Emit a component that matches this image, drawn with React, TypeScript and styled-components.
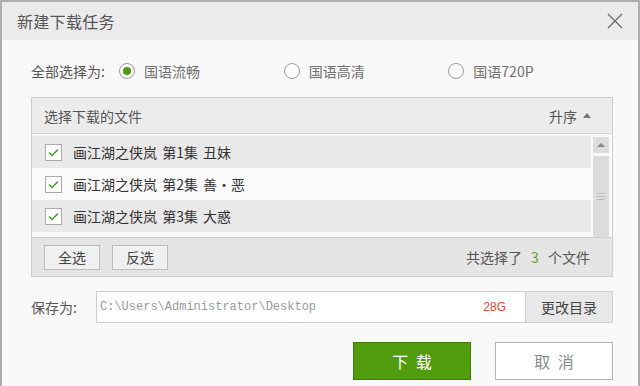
import React from 'react';
import styled, { createGlobalStyle } from 'styled-components';

const Global = createGlobalStyle`
  html, body { margin: 0; padding: 0; background: #ffffff; }
  body { font-family: "Noto Sans CJK SC", "Microsoft YaHei", sans-serif; }
  * { box-sizing: border-box; }
`;

const Window = styled.div`
  width: 640px;
  height: 386px;
  border: 2px solid #aeaeae;
  border-bottom: none;
  background: #f9f9f9;
  display: flex;
  flex-direction: column;
`;

const TitleBar = styled.div`
  height: 38px;
  flex: none;
  background: #ebebeb;
  display: flex;
  align-items: center;
  justify-content: space-between;
  padding: 0 15px 0 15px;
`;

const Title = styled.div`
  font-size: 16px;
  color: #555;
  letter-spacing: 0.3px;
`;

const Close = styled.svg`
  width: 16px;
  height: 16px;
  display: block;
`;

const Body = styled.div`
  flex: 1;
  display: flex;
  flex-direction: column;
  padding: 0 25px 0 29px;
`;

const RadioRow = styled.div`
  display: flex;
  align-items: center;
  height: 24px;
  margin-top: 19px;
`;

const RowLabel = styled.div<{ $w: number }>`
  width: ${p => p.$w}px;
  flex: none;
  font-size: 14px;
  color: #555;
`;

const Option = styled.div`
  width: 165px;
  display: flex;
  align-items: center;
  gap: 9px;
  font-size: 14px;
  color: #707070;
`;

const RadioCircle = styled.span<{ $on?: boolean }>`
  width: 16px;
  height: 16px;
  border-radius: 50%;
  border: 1px solid #9a9a9a;
  background: #fff;
  display: flex;
  align-items: center;
  justify-content: center;
  &::after {
    content: '';
    width: 8px;
    height: 8px;
    border-radius: 50%;
    background: ${p => (p.$on ? '#4f9a12' : 'transparent')};
  }
`;

const Panel = styled.div`
  margin-top: 14px;
  height: 180px;
  border: 1px solid #cdcdcd;
  background: #fafafa;
  display: flex;
  flex-direction: column;
`;

const PanelHead = styled.div`
  height: 36px;
  flex: none;
  background: #ececec;
  border-bottom: 1px solid #d3d3d3;
  display: flex;
  align-items: center;
  justify-content: space-between;
  padding: 0 21px 0 12px;
  font-size: 14px;
  color: #555;
`;

const Sort = styled.div`
  display: flex;
  align-items: center;
  gap: 6px;
`;

const Tri = styled.span`
  width: 0;
  height: 0;
  border-left: 4.5px solid transparent;
  border-right: 4.5px solid transparent;
  border-bottom: 5px solid #777;
`;

const ListArea = styled.div`
  flex: 1;
  display: flex;
  padding-top: 2px;
  overflow: hidden;
`;

const Rows = styled.div`
  flex: 1;
  display: flex;
  flex-direction: column;
`;

const Row = styled.div<{ $alt?: boolean }>`
  height: 32px;
  flex: none;
  display: flex;
  align-items: center;
  gap: 11px;
  padding-left: 13px;
  background: ${p => (p.$alt ? '#fafafa' : '#e9e9e9')};
  font-size: 14px;
  color: #333;
  white-space: pre;
  word-spacing: 2px;
`;

const Check = styled.span`
  width: 17px;
  height: 17px;
  border: 1px solid #a9a9a9;
  background: #fff;
  display: flex;
  align-items: center;
  justify-content: center;
`;

const Scrollbar = styled.div`
  width: 16px;
  margin: 1px 3px 0 2px;
  display: flex;
  flex-direction: column;
  gap: 3px;
`;

const ScrollBtn = styled.div`
  height: 16px;
  background: #dcdcdc;
  display: flex;
  align-items: center;
  justify-content: center;
`;

const SmallTri = styled.span`
  width: 0;
  height: 0;
  border-left: 4px solid transparent;
  border-right: 4px solid transparent;
  border-bottom: 4px solid #888;
`;

const Thumb = styled.div`
  flex: 1;
  background: #dcdcdc;
  display: flex;
  align-items: center;
  justify-content: center;
`;

const Grip = styled.span`
  width: 8px;
  height: 7px;
  border-top: 1px solid #bdbdbd;
  border-bottom: 1px solid #bdbdbd;
  position: relative;
  &::after {
    content: '';
    position: absolute;
    left: 0;
    right: 0;
    top: 2px;
    border-top: 1px solid #bdbdbd;
  }
`;

const PanelFoot = styled.div`
  height: 39px;
  flex: none;
  background: #e5e5e5;
  border-top: 1px solid #d0d0d0;
  display: flex;
  align-items: center;
  justify-content: space-between;
  padding: 0 22px 0 12px;
`;

const FootBtns = styled.div`
  display: flex;
  gap: 12px;
`;

const SmallBtn = styled.div`
  width: 56px;
  height: 25px;
  border: 1px solid #bcbcbc;
  background: #f0f0f0;
  font-size: 14px;
  color: #444;
  display: flex;
  align-items: center;
  justify-content: center;
`;

const Count = styled.div`
  font-size: 14px;
  color: #555;
  white-space: pre;
  word-spacing: 6px;
`;

const Num = styled.span`
  color: #6a9e2a;
`;

const SaveRow = styled.div`
  margin-top: 14px;
  height: 32px;
  display: flex;
  align-items: center;
`;

const PathBox = styled.div`
  flex: 1;
  height: 32px;
  border: 1px solid #cfcfcf;
  background: #fff;
  display: flex;
  align-items: center;
  justify-content: space-between;
  padding: 0 19px 0 3px;
`;

const PathText = styled.span`
  font-family: "Liberation Mono", "DejaVu Sans Mono", monospace;
  font-size: 12px;
  color: #9a9a9a;
`;

const Size = styled.span`
  font-family: "Liberation Sans", Arial, sans-serif;
  font-size: 12px;
  color: #e04a2e;
`;

const DirBtn = styled.div`
  width: 87px;
  height: 32px;
  background: #e8e8e8;
  border: 1px solid #cfcfcf;
  border-left: none;
  font-size: 14px;
  color: #444;
  display: flex;
  align-items: center;
  justify-content: center;
`;

const Actions = styled.div`
  margin-top: 19px;
  display: flex;
  justify-content: flex-end;
  gap: 24px;
`;

const ActionBtn = styled.div<{ $primary?: boolean }>`
  width: 118px;
  height: 38px;
  border: 1px solid ${p => (p.$primary ? '#3f7d08' : '#b3b3b3')};
  background: ${p => (p.$primary ? '#519c0c' : '#ffffff')};
  color: ${p => (p.$primary ? '#ffffff' : '#8a8a8a')};
  font-size: 16px;
  display: flex;
  align-items: center;
  justify-content: center;
  white-space: pre;
  word-spacing: 4px;
`;

const files = ['画江湖之侠岚 第1集 丑妹', '画江湖之侠岚 第2集 善・恶', '画江湖之侠岚 第3集 大惑', ''];

export default function App() {
  return (
    <>
      <Global />
      <Window>
        <TitleBar>
          <Title>新建下载任务</Title>
          <Close viewBox="0 0 16 16">
            <path d="M1 1 L15 15 M15 1 L1 15" stroke="#6e6e6e" strokeWidth="1.4" fill="none" />
          </Close>
        </TitleBar>
        <Body>
          <RadioRow>
            <RowLabel $w={88}>全部选择为:</RowLabel>
            <Option>
              <RadioCircle $on />
              国语流畅
            </Option>
            <Option>
              <RadioCircle />
              国语高清
            </Option>
            <Option>
              <RadioCircle />
              国语720P
            </Option>
          </RadioRow>
          <Panel>
            <PanelHead>
              <span>选择下载的文件</span>
              <Sort>
                升序
                <Tri />
              </Sort>
            </PanelHead>
            <ListArea>
              <Rows>
                {files.map((f, i) => (
                  <Row key={i} $alt={i % 2 === 1}>
                    {f && (
                      <>
                        <Check>
                          <svg width="11" height="9" viewBox="0 0 11 9">
                            <path d="M1 4.5 L4 7.5 L10 1.5" stroke="#3f9a2c" strokeWidth="1.5" fill="none" />
                          </svg>
                        </Check>
                        <span>{f}</span>
                      </>
                    )}
                  </Row>
                ))}
              </Rows>
              <Scrollbar>
                <ScrollBtn>
                  <SmallTri />
                </ScrollBtn>
                <Thumb>
                  <Grip />
                </Thumb>
              </Scrollbar>
            </ListArea>
            <PanelFoot>
              <FootBtns>
                <SmallBtn>全选</SmallBtn>
                <SmallBtn>反选</SmallBtn>
              </FootBtns>
              <Count>
                共选择了 <Num>3</Num> 个文件
              </Count>
            </PanelFoot>
          </Panel>
          <SaveRow>
            <RowLabel $w={65}>保存为:</RowLabel>
            <PathBox>
              <PathText>C:\Users\Administrator\Desktop</PathText>
              <Size>28G</Size>
            </PathBox>
            <DirBtn>更改目录</DirBtn>
          </SaveRow>
          <Actions>
            <ActionBtn $primary>下 载</ActionBtn>
            <ActionBtn>取 消</ActionBtn>
          </Actions>
        </Body>
      </Window>
    </>
  );
}
